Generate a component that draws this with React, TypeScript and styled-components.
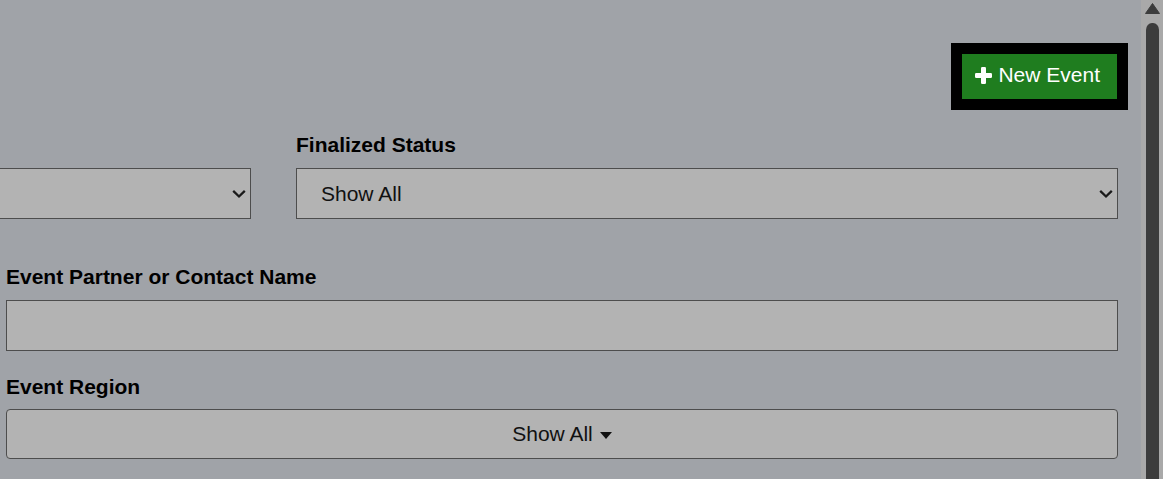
import styled, { createGlobalStyle } from 'styled-components';

const GlobalStyle = createGlobalStyle`
    html, body {
        margin: 0;
        padding: 0;
        overflow: hidden;
    }
    body {
        background: #a0a3a8;
        font-family: "Liberation Sans", Arial, sans-serif;
        color: #000;
    }
`

const Shell = styled.div`
    display: flex;
    height: 100vh;
    overflow: hidden;
`

const Main = styled.main`
    flex: 1;
    min-width: 0;
    overflow: hidden;
    padding: 54px 23px 22px 6px;
`

const ScrollRail = styled.div`
    flex: none;
    width: 22px;
    display: flex;
    flex-direction: column;
    background: #a9a9a9;
`

const ScrollArrow = styled.div`
    flex: none;
    height: 23px;
    display: flex;
    justify-content: center;
    padding-top: 3px;
    box-sizing: border-box;
    padding-left: 1px;
`

const ScrollThumb = styled.div`
    flex: 1;
    margin: 0 4px 0 5px;
    background: #3c3c3c;
    border-radius: 6px 6px 0 0 / 7px 7px 0 0;
`

const Toolbar = styled.div`
    display: flex;
    justify-content: flex-end;
`

const NewEventButton = styled.button`
    display: inline-flex;
    align-items: center;
    gap: 6px;
    height: 45px;
    margin-right: 1px;
    padding: 0 17px 4px 13px;
    background: #1f7d1f;
    color: #fff;
    border: none;
    border-radius: 0;
    outline: 11px solid #000;
    font-family: inherit;
    font-size: 21px;
    cursor: pointer;

    svg {
        flex: none;
        margin-top: 1px;
    }
`

const FilterRow = styled.div`
    display: grid;
    grid-template-columns: 1fr 1fr;
    column-gap: 45px;
    margin: 34px 0 0 -577px;
`

const Field = styled.div<{ $top?: number }>`
    margin-top: ${p => p.$top ?? 0}px;
`

const Label = styled.label<{ $gap?: number }>`
    display: block;
    font-size: 21px;
    font-weight: bold;
    line-height: 24px;
    height: 24px;
    margin-bottom: ${p => p.$gap ?? 11}px;
`

const SelectWrap = styled.div`
    position: relative;

    svg {
        position: absolute;
        right: 5px;
        top: 50%;
        transform: translateY(-50%);
        pointer-events: none;
    }
`

const Select = styled.select`
    appearance: none;
    display: block;
    width: 100%;
    height: 51px;
    box-sizing: border-box;
    padding: 0 30px 0 24px;
    background: #b3b3b3;
    border: 1px solid #4d4d4d;
    border-radius: 0;
    font-family: inherit;
    font-size: 21px;
    color: #111;
    outline: none;
`

const TextInput = styled.input`
    display: block;
    width: 100%;
    height: 51px;
    box-sizing: border-box;
    padding: 0 12px;
    background: #b3b3b3;
    border: 1px solid #4d4d4d;
    border-radius: 0;
    font-family: inherit;
    font-size: 21px;
    outline: none;
`

const DropdownButton = styled.button`
    display: flex;
    align-items: center;
    justify-content: center;
    gap: 7px;
    width: 100%;
    height: 50px;
    padding: 0;
    background: #b3b3b3;
    border: 1px solid #4d4d4d;
    border-radius: 4px;
    font-family: inherit;
    font-size: 21px;
    color: #111;
    cursor: pointer;

    svg {
        margin-top: 3px;
    }
`

const Chevron = () => (
    <svg width="14" height="9" viewBox="0 0 14 9">
        <path d="M1.2 1.4 L7 7 L12.8 1.4" fill="none" stroke="#1a1a1a" strokeWidth="2.3" />
    </svg>
)

const PlusIcon = () => (
    <svg width="17" height="17" viewBox="0 0 17 17">
        <rect x="6" y="0" width="5" height="17" rx="1.2" fill="#fff" />
        <rect x="0" y="6" width="17" height="5" rx="1.2" fill="#fff" />
    </svg>
)

const CaretDown = () => (
    <svg width="12" height="7" viewBox="0 0 12 7">
        <polygon points="0,0 12,0 6,7" fill="#111" />
    </svg>
)

const ArrowUp = () => (
    <svg width="15" height="11" viewBox="0 0 15 11">
        <path d="M7.5 0.5 L14.5 10.5 L0.5 10.5 Z" fill="#3c3c3c" stroke="#3c3c3c" strokeWidth="1" strokeLinejoin="round" />
    </svg>
)

function App() {
    return (
        <>
            <GlobalStyle />
            <Shell>
                <Main>
                    <Toolbar>
                        <NewEventButton>
                            <PlusIcon />
                            New Event
                        </NewEventButton>
                    </Toolbar>
                    <FilterRow>
                        <Field>
                            <Label aria-hidden="true" />
                            <SelectWrap>
                                <Select defaultValue="">
                                    <option value=""></option>
                                </Select>
                                <Chevron />
                            </SelectWrap>
                        </Field>
                        <Field>
                            <Label>Finalized Status</Label>
                            <SelectWrap>
                                <Select defaultValue="all">
                                    <option value="all">Show All</option>
                                    <option value="yes">Finalized</option>
                                    <option value="no">Not Finalized</option>
                                </Select>
                                <Chevron />
                            </SelectWrap>
                        </Field>
                    </FilterRow>
                    <Field $top={46}>
                        <Label>Event Partner or Contact Name</Label>
                        <TextInput type="text" />
                    </Field>
                    <Field $top={24}>
                        <Label $gap={10}>Event Region</Label>
                        <DropdownButton>
                            Show All
                            <CaretDown />
                        </DropdownButton>
                    </Field>
                </Main>
                <ScrollRail>
                    <ScrollArrow>
                        <ArrowUp />
                    </ScrollArrow>
                    <ScrollThumb />
                </ScrollRail>
            </Shell>
        </>
    );
}

export default App;
